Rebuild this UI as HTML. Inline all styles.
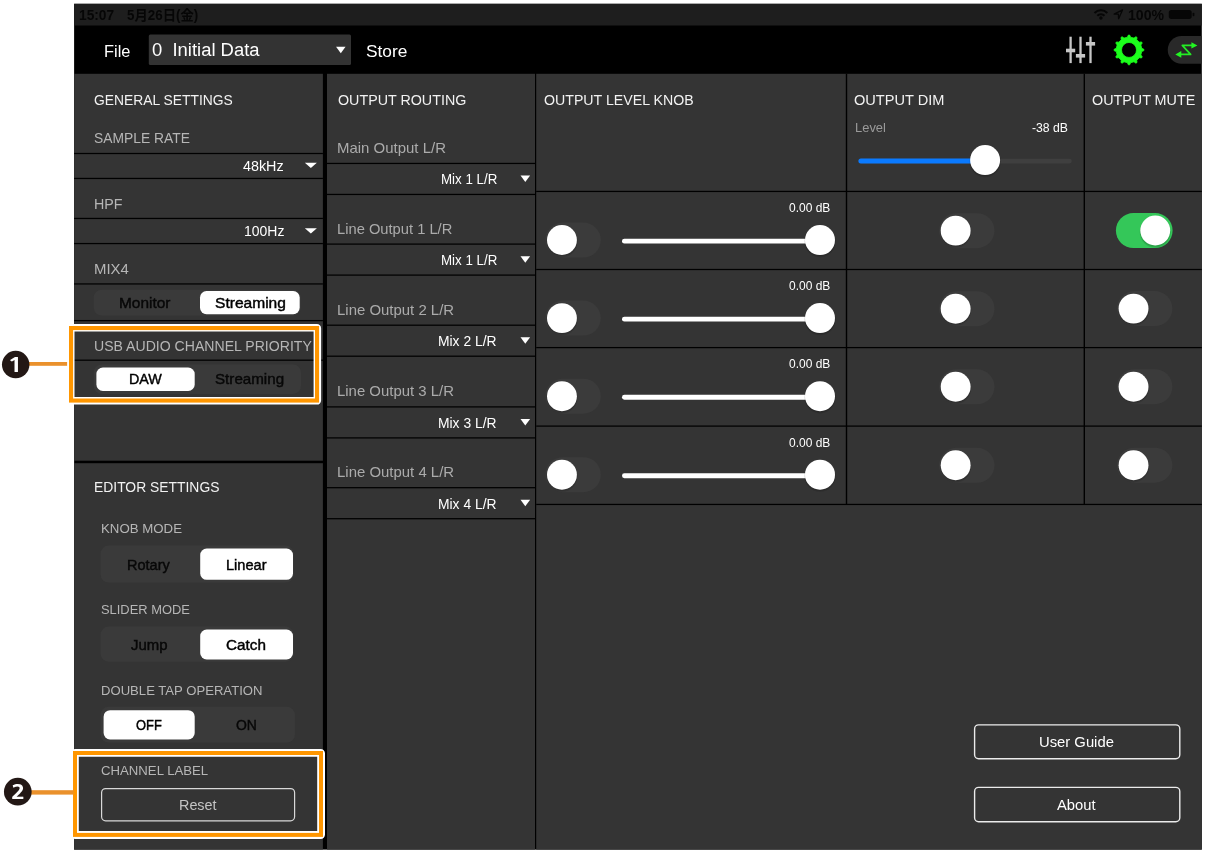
<!DOCTYPE html>
<html lang="ja"><head><meta charset="utf-8"><title>Settings</title>
<style>
html,body{margin:0;padding:0;background:#fff;}
body{width:1205px;height:852px;position:relative;overflow:hidden;font-family:"Liberation Sans","Noto Sans CJK JP",sans-serif;}
#app{position:absolute;left:0;top:0;width:1205px;height:852px;will-change:transform;}
#shapes{position:absolute;left:0;top:0;display:block;}
.t{position:absolute;white-space:nowrap;line-height:1.4;transform-origin:0 0;}
</style></head><body><div id="app">
<svg id="shapes" class="r" width="1205" height="852" viewBox="0 0 1205 852">
<rect x="74.10" y="3.80" width="1127.70" height="845.80" fill="#000"/>
<rect x="74.10" y="3.80" width="1127.70" height="21.70" fill="#1e1e1e"/>
<rect x="1168.80" y="10.00" width="22.90" height="8.90" rx="2.6" fill="#060606"/>
<rect x="1192.60" y="12.80" width="1.80" height="3.40" rx="0.8" fill="#060606"/>
<g fill="none" stroke="#060606" stroke-width="2.1"><path d="M1094.5 12.9a9.2 9.2 0 0 1 12.8 0"/><path d="M1097.3 15.8a5.3 5.3 0 0 1 7.2 0"/></g><circle cx="1100.9" cy="18" r="1.7" fill="#060606"/><path d="M1122.5 9.9L1114.2 14.1h4.2l.2 4.6z" fill="none" stroke="#060606" stroke-width="1.3" stroke-linejoin="round"/>
<rect x="148.80" y="34.50" width="202.20" height="30.60" rx="1.5" fill="#333"/>
<path d="M336.05 46.75h9.5l-4.75 6.5z" fill="#fff"/>
<rect x="1069.45" y="36.70" width="2.30" height="26.40" fill="#c6c6c6"/>
<rect x="1066.00" y="48.70" width="9.20" height="3.60" fill="#c6c6c6"/>
<rect x="1079.35" y="36.70" width="2.30" height="26.40" fill="#c6c6c6"/>
<rect x="1075.90" y="54.00" width="9.20" height="3.60" fill="#c6c6c6"/>
<rect x="1089.35" y="36.70" width="2.30" height="26.40" fill="#c6c6c6"/>
<rect x="1085.90" y="42.00" width="9.20" height="3.60" fill="#c6c6c6"/>
<path d="M1127.40 37.20L1128.33 35.07L1129.67 35.07L1130.60 37.20L1133.99 38.11L1135.86 36.72L1137.02 37.39L1136.76 39.71L1139.24 42.19L1141.56 41.93L1142.23 43.09L1140.84 44.96L1141.75 48.35L1143.88 49.28L1143.88 50.62L1141.75 51.55L1140.84 54.94L1142.23 56.81L1141.56 57.97L1139.24 57.71L1136.76 60.19L1137.02 62.51L1135.86 63.18L1133.99 61.79L1130.60 62.70L1129.67 64.83L1128.33 64.83L1127.40 62.70L1124.01 61.79L1122.14 63.18L1120.98 62.51L1121.24 60.19L1118.76 57.71L1116.44 57.97L1115.77 56.81L1117.16 54.94L1116.25 51.55L1114.12 50.62L1114.12 49.28L1116.25 48.35L1117.16 44.96L1115.77 43.09L1116.44 41.93L1118.76 42.19L1121.24 39.71L1120.98 37.39L1122.14 36.72L1124.01 38.11ZM1136.50 49.95A7.5 7.5 0 1 0 1121.50 49.95A7.5 7.5 0 1 0 1136.50 49.95Z" fill="#1cff1c" fill-rule="evenodd" stroke="#1cff1c" stroke-width="0.8" stroke-linejoin="round"/>
<path d="M1201.8 36H1181.6a13.85 13.85 0 0 0 0 27.7H1201.8z" fill="#292929"/>
<g transform="translate(1172 38)"><path d="M8 16.4H18.6L10.3 7.4H21" fill="none" stroke="#24ec24" stroke-width="1.7" stroke-linejoin="round" stroke-linecap="round"/><path d="M3.3 16.4L9.3 13.1V19.7Z M25.4 7.4L19.4 4.2V10.6Z" fill="#22f522"/></g>
<rect x="74.10" y="73.80" width="248.80" height="386.90" fill="#343434"/>
<rect x="74.10" y="463.20" width="248.80" height="386.40" fill="#343434"/>
<rect x="74.10" y="152.88" width="248.80" height="1.25" fill="#000"/>
<rect x="74.10" y="177.82" width="248.80" height="1.25" fill="#000"/>
<rect x="74.10" y="217.82" width="248.80" height="1.25" fill="#000"/>
<rect x="74.10" y="242.93" width="248.80" height="1.25" fill="#000"/>
<rect x="74.10" y="283.32" width="248.80" height="1.25" fill="#000"/>
<rect x="74.10" y="319.98" width="248.80" height="1.25" fill="#000"/>
<rect x="74.10" y="359.57" width="248.80" height="1.25" fill="#000"/>
<path d="M304.85 162.65h12.0l-6.00 5.3z" fill="#fff"/>
<path d="M304.85 228.25h12.0l-6.00 5.3z" fill="#fff"/>
<rect x="93.70" y="289.70" width="207.10" height="25.90" rx="8" fill="#3a3a3a"/>
<rect x="200.00" y="291.00" width="99.70" height="23.20" rx="6.5" fill="#fff"/>
<rect x="93.70" y="364.40" width="207.30" height="29.50" rx="8" fill="#3a3a3a"/>
<rect x="96.40" y="367.50" width="98.30" height="23.50" rx="6.5" fill="#fff"/>
<rect x="100.60" y="545.60" width="193.00" height="37.00" rx="8" fill="#3a3a3a"/>
<rect x="200.20" y="548.60" width="92.80" height="31.20" rx="6.5" fill="#fff"/>
<rect x="100.60" y="626.60" width="193.00" height="35.10" rx="8" fill="#3a3a3a"/>
<rect x="200.20" y="629.60" width="92.80" height="29.90" rx="6.5" fill="#fff"/>
<rect x="100.60" y="706.80" width="194.30" height="35.80" rx="8" fill="#3a3a3a"/>
<rect x="103.60" y="710.20" width="91.10" height="29.30" rx="6.5" fill="#fff"/>
<rect x="101.6" y="788.6" width="193" height="32.2" rx="4" fill="none" stroke="#d8d8d8" stroke-width="1.2"/>
<rect x="327.00" y="73.80" width="208.00" height="775.80" fill="#343434"/>
<rect x="327.00" y="162.82" width="208.00" height="1.25" fill="#000"/>
<rect x="327.00" y="193.82" width="208.00" height="1.25" fill="#000"/>
<path d="M520.50 175.60h9.6l-4.80 6.5z" fill="#fff"/>
<rect x="327.00" y="243.47" width="208.00" height="1.25" fill="#000"/>
<rect x="327.00" y="274.48" width="208.00" height="1.25" fill="#000"/>
<path d="M520.50 256.25h9.6l-4.80 6.5z" fill="#fff"/>
<rect x="327.00" y="324.57" width="208.00" height="1.25" fill="#000"/>
<rect x="327.00" y="355.57" width="208.00" height="1.25" fill="#000"/>
<path d="M520.50 337.35h9.6l-4.80 6.5z" fill="#fff"/>
<rect x="327.00" y="406.27" width="208.00" height="1.25" fill="#000"/>
<rect x="327.00" y="437.27" width="208.00" height="1.25" fill="#000"/>
<path d="M520.50 419.05h9.6l-4.80 6.5z" fill="#fff"/>
<rect x="327.00" y="487.07" width="208.00" height="1.25" fill="#000"/>
<rect x="327.00" y="518.08" width="208.00" height="1.25" fill="#000"/>
<path d="M520.50 499.85h9.6l-4.80 6.5z" fill="#fff"/>
<rect x="536.20" y="73.80" width="665.60" height="775.80" fill="#343434"/>
<rect x="845.80" y="73.80" width="1.40" height="430.65" fill="#000"/>
<rect x="1083.60" y="73.80" width="1.40" height="430.65" fill="#000"/>
<rect x="536.20" y="190.82" width="665.60" height="1.25" fill="#000"/>
<rect x="536.20" y="268.88" width="665.60" height="1.25" fill="#000"/>
<rect x="536.20" y="346.98" width="665.60" height="1.25" fill="#000"/>
<rect x="536.20" y="425.48" width="665.60" height="1.25" fill="#000"/>
<rect x="536.20" y="503.82" width="665.60" height="1.25" fill="#000"/>
<rect x="858.60" y="158.80" width="213.20" height="4.60" rx="2.3" fill="#3f3f3f"/>
<rect x="858.40" y="158.60" width="127.60" height="5.00" rx="2.5" fill="#0a7aff"/>
<circle cx="985.10" cy="161.70" r="15.60" fill="#000" opacity="0.10"/>
<circle cx="985.10" cy="160.90" r="15.30" fill="#000" opacity="0.10"/>
<circle cx="985.10" cy="160.10" r="15.00" fill="#fff"/>
<rect x="545.40" y="222.55" width="55.40" height="35.00" rx="17.5" fill="#3b3b3b"/>
<circle cx="561.95" cy="241.65" r="15.55" fill="#000" opacity="0.10"/>
<circle cx="561.95" cy="240.85" r="15.25" fill="#000" opacity="0.10"/>
<circle cx="561.95" cy="240.05" r="14.95" fill="#fff"/>
<rect x="622.00" y="238.65" width="200.00" height="4.90" rx="2.4" fill="#fff"/>
<circle cx="820.00" cy="241.65" r="15.60" fill="#000" opacity="0.10"/>
<circle cx="820.00" cy="240.85" r="15.30" fill="#000" opacity="0.10"/>
<circle cx="820.00" cy="240.05" r="15.00" fill="#fff"/>
<rect x="939.10" y="213.15" width="55.40" height="35.00" rx="17.5" fill="#3b3b3b"/>
<circle cx="955.65" cy="232.25" r="15.55" fill="#000" opacity="0.10"/>
<circle cx="955.65" cy="231.45" r="15.25" fill="#000" opacity="0.10"/>
<circle cx="955.65" cy="230.65" r="14.95" fill="#fff"/>
<rect x="1115.90" y="213.05" width="56.70" height="35.00" rx="17.5" fill="#34c759"/>
<circle cx="1155.25" cy="232.15" r="15.55" fill="#000" opacity="0.10"/>
<circle cx="1155.25" cy="231.35" r="15.25" fill="#000" opacity="0.10"/>
<circle cx="1155.25" cy="230.55" r="14.95" fill="#fff"/>
<rect x="545.40" y="300.60" width="55.40" height="35.00" rx="17.5" fill="#3b3b3b"/>
<circle cx="561.95" cy="319.70" r="15.55" fill="#000" opacity="0.10"/>
<circle cx="561.95" cy="318.90" r="15.25" fill="#000" opacity="0.10"/>
<circle cx="561.95" cy="318.10" r="14.95" fill="#fff"/>
<rect x="622.00" y="316.70" width="200.00" height="4.90" rx="2.4" fill="#fff"/>
<circle cx="820.00" cy="319.70" r="15.60" fill="#000" opacity="0.10"/>
<circle cx="820.00" cy="318.90" r="15.30" fill="#000" opacity="0.10"/>
<circle cx="820.00" cy="318.10" r="15.00" fill="#fff"/>
<rect x="939.10" y="291.20" width="55.40" height="35.00" rx="17.5" fill="#3b3b3b"/>
<circle cx="955.65" cy="310.30" r="15.55" fill="#000" opacity="0.10"/>
<circle cx="955.65" cy="309.50" r="15.25" fill="#000" opacity="0.10"/>
<circle cx="955.65" cy="308.70" r="14.95" fill="#fff"/>
<rect x="1117.00" y="291.10" width="55.40" height="35.00" rx="17.5" fill="#3b3b3b"/>
<circle cx="1133.55" cy="310.20" r="15.55" fill="#000" opacity="0.10"/>
<circle cx="1133.55" cy="309.40" r="15.25" fill="#000" opacity="0.10"/>
<circle cx="1133.55" cy="308.60" r="14.95" fill="#fff"/>
<rect x="545.40" y="378.70" width="55.40" height="35.00" rx="17.5" fill="#3b3b3b"/>
<circle cx="561.95" cy="397.80" r="15.55" fill="#000" opacity="0.10"/>
<circle cx="561.95" cy="397.00" r="15.25" fill="#000" opacity="0.10"/>
<circle cx="561.95" cy="396.20" r="14.95" fill="#fff"/>
<rect x="622.00" y="394.80" width="200.00" height="4.90" rx="2.4" fill="#fff"/>
<circle cx="820.00" cy="397.80" r="15.60" fill="#000" opacity="0.10"/>
<circle cx="820.00" cy="397.00" r="15.30" fill="#000" opacity="0.10"/>
<circle cx="820.00" cy="396.20" r="15.00" fill="#fff"/>
<rect x="939.10" y="369.30" width="55.40" height="35.00" rx="17.5" fill="#3b3b3b"/>
<circle cx="955.65" cy="388.40" r="15.55" fill="#000" opacity="0.10"/>
<circle cx="955.65" cy="387.60" r="15.25" fill="#000" opacity="0.10"/>
<circle cx="955.65" cy="386.80" r="14.95" fill="#fff"/>
<rect x="1117.00" y="369.20" width="55.40" height="35.00" rx="17.5" fill="#3b3b3b"/>
<circle cx="1133.55" cy="388.30" r="15.55" fill="#000" opacity="0.10"/>
<circle cx="1133.55" cy="387.50" r="15.25" fill="#000" opacity="0.10"/>
<circle cx="1133.55" cy="386.70" r="14.95" fill="#fff"/>
<rect x="545.40" y="457.20" width="55.40" height="35.00" rx="17.5" fill="#3b3b3b"/>
<circle cx="561.95" cy="476.30" r="15.55" fill="#000" opacity="0.10"/>
<circle cx="561.95" cy="475.50" r="15.25" fill="#000" opacity="0.10"/>
<circle cx="561.95" cy="474.70" r="14.95" fill="#fff"/>
<rect x="622.00" y="473.30" width="200.00" height="4.90" rx="2.4" fill="#fff"/>
<circle cx="820.00" cy="476.30" r="15.60" fill="#000" opacity="0.10"/>
<circle cx="820.00" cy="475.50" r="15.30" fill="#000" opacity="0.10"/>
<circle cx="820.00" cy="474.70" r="15.00" fill="#fff"/>
<rect x="939.10" y="447.80" width="55.40" height="35.00" rx="17.5" fill="#3b3b3b"/>
<circle cx="955.65" cy="466.90" r="15.55" fill="#000" opacity="0.10"/>
<circle cx="955.65" cy="466.10" r="15.25" fill="#000" opacity="0.10"/>
<circle cx="955.65" cy="465.30" r="14.95" fill="#fff"/>
<rect x="1117.00" y="447.70" width="55.40" height="35.00" rx="17.5" fill="#3b3b3b"/>
<circle cx="1133.55" cy="466.80" r="15.55" fill="#000" opacity="0.10"/>
<circle cx="1133.55" cy="466.00" r="15.25" fill="#000" opacity="0.10"/>
<circle cx="1133.55" cy="465.20" r="14.95" fill="#fff"/>
<rect x="974.60" y="724.90" width="205.2" height="33.90" rx="4" fill="none" stroke="#ebebeb" stroke-width="1.4"/>
<rect x="974.60" y="787.40" width="205.2" height="34.30" rx="4" fill="none" stroke="#ebebeb" stroke-width="1.4"/>
<rect x="70.75" y="327.75" width="246.60" height="73.10" rx="0.4" fill="none" stroke="#fff" stroke-width="7.50"/>
<rect x="71.05" y="328.05" width="246.00" height="72.50" rx="0" fill="none" stroke="#ff9600" stroke-width="4.10"/>
<rect x="15.70" y="362.00" width="51.40" height="3.80" fill="#ea912c"/>
<circle cx="15.70" cy="364.60" r="13.75" fill="#231815"/>
<rect x="74.90" y="752.90" width="246.20" height="82.10" rx="0.4" fill="none" stroke="#fff" stroke-width="7.80"/>
<rect x="75.00" y="753.00" width="246.00" height="81.90" rx="0" fill="none" stroke="#ff9600" stroke-width="4.00"/>
<rect x="17.80" y="790.20" width="55.70" height="4.40" fill="#ea912c"/>
<circle cx="17.80" cy="791.70" r="13.85" fill="#231815"/>
</svg>
<div class="t" id="t0" style="left:79.49px;top:5.54px;font-size:14.1px;color:#060606;transform:scaleX(0.9745);font-weight:700;">15:07</div>
<div class="t" id="t1" style="left:126.84px;top:5.54px;font-size:14.1px;color:#060606;transform:scaleX(0.9476);font-weight:700;">5月26日(金)</div>
<div class="t" id="t2" style="left:1127.90px;top:5.54px;font-size:13.81px;color:#060606;transform:scaleX(1.0204);font-weight:700;">100%</div>
<div class="t" id="t3" style="left:103.66px;top:41.40px;font-size:15.99px;color:#fff;transform:scaleX(1.0244);">File</div>
<div class="t" id="t4" style="left:151.96px;top:37.26px;font-size:19.19px;color:#fff;transform:scaleX(0.9599);">0&nbsp; Initial Data</div>
<div class="t" id="t5" style="left:365.87px;top:41.40px;font-size:15.99px;color:#fff;transform:scaleX(1.0839);">Store</div>
<div class="t" id="t6" style="left:93.89px;top:89.83px;font-size:14.83px;color:#f2f2f2;transform:scaleX(0.9342);">GENERAL SETTINGS</div>
<div class="t" id="t7" style="left:93.69px;top:128.39px;font-size:14.53px;color:#b6b6b6;transform:scaleX(0.9533);">SAMPLE RATE</div>
<div class="t" id="t8" style="left:242.86px;top:156.98px;font-size:14.1px;color:#fff;transform:scaleX(1.0173);">48kHz</div>
<div class="t" id="t9" style="left:93.74px;top:193.69px;font-size:14.53px;color:#b6b6b6;transform:scaleX(0.9830);">HPF</div>
<div class="t" id="t10" style="left:243.58px;top:222.38px;font-size:14.1px;color:#fff;transform:scaleX(0.9911);">100Hz</div>
<div class="t" id="t11" style="left:94.11px;top:258.99px;font-size:14.53px;color:#b6b6b6;transform:scaleX(1.0285);">MIX4</div>
<div class="t" id="t12" style="left:118.92px;top:292.86px;font-size:14.68px;color:#080808;transform:scaleX(1.0519);-webkit-text-stroke:0.42px currentColor;">Monitor</div>
<div class="t" id="t13" style="left:215.02px;top:292.86px;font-size:14.68px;color:#000;transform:scaleX(1.0608);-webkit-text-stroke:0.42px currentColor;">Streaming</div>
<div class="t" id="t14" style="left:94.13px;top:335.89px;font-size:14.53px;color:#b6b6b6;transform:scaleX(0.9702);">USB AUDIO CHANNEL PRIORITY</div>
<div class="t" id="t15" style="left:129.09px;top:369.46px;font-size:14.68px;color:#000;transform:scaleX(0.9758);-webkit-text-stroke:0.42px currentColor;">DAW</div>
<div class="t" id="t16" style="left:214.92px;top:369.46px;font-size:14.68px;color:#080808;transform:scaleX(1.0335);-webkit-text-stroke:0.42px currentColor;">Streaming</div>
<div class="t" id="t17" style="left:93.94px;top:476.63px;font-size:14.83px;color:#f2f2f2;transform:scaleX(0.9360);">EDITOR SETTINGS</div>
<div class="t" id="t18" style="left:100.55px;top:519.85px;font-size:13.23px;color:#b6b6b6;transform:scaleX(1.0023);">KNOB MODE</div>
<div class="t" id="t19" style="left:126.89px;top:554.62px;font-size:14.39px;color:#080808;transform:scaleX(1.0111);-webkit-text-stroke:0.42px currentColor;">Rotary</div>
<div class="t" id="t20" style="left:226.19px;top:554.62px;font-size:14.39px;color:#000;transform:scaleX(1.0160);-webkit-text-stroke:0.42px currentColor;">Linear</div>
<div class="t" id="t21" style="left:100.73px;top:601.35px;font-size:13.23px;color:#b6b6b6;transform:scaleX(0.9762);">SLIDER MODE</div>
<div class="t" id="t22" style="left:131.46px;top:634.82px;font-size:14.39px;color:#080808;transform:scaleX(1.0372);-webkit-text-stroke:0.42px currentColor;">Jump</div>
<div class="t" id="t23" style="left:226.19px;top:634.82px;font-size:14.39px;color:#000;transform:scaleX(1.0620);-webkit-text-stroke:0.42px currentColor;">Catch</div>
<div class="t" id="t24" style="left:100.56px;top:682.15px;font-size:13.23px;color:#b6b6b6;transform:scaleX(0.9915);">DOUBLE TAP OPERATION</div>
<div class="t" id="t25" style="left:136.08px;top:715.32px;font-size:14.39px;color:#000;transform:scaleX(0.8958);-webkit-text-stroke:0.42px currentColor;">OFF</div>
<div class="t" id="t26" style="left:235.91px;top:715.32px;font-size:14.39px;color:#080808;transform:scaleX(0.9709);-webkit-text-stroke:0.42px currentColor;">ON</div>
<div class="t" id="t27" style="left:100.76px;top:761.55px;font-size:13.23px;color:#b6b6b6;transform:scaleX(0.9969);">CHANNEL LABEL</div>
<div class="t" id="t28" style="left:178.97px;top:795.22px;font-size:14.39px;color:#c4c4c4;transform:scaleX(0.9999);">Reset</div>
<div class="t" id="t29" style="left:337.61px;top:89.83px;font-size:14.83px;color:#f2f2f2;transform:scaleX(0.9634);">OUTPUT ROUTING</div>
<div class="t" id="t30" style="left:337.34px;top:139.02px;font-size:14.1px;color:#ababab;transform:scaleX(1.0617);">Main Output L/R</div>
<div class="t" id="t31" style="left:440.51px;top:169.61px;font-size:13.95px;color:#fff;transform:scaleX(0.9567);">Mix 1 L/R</div>
<div class="t" id="t32" style="left:337.48px;top:219.92px;font-size:14.1px;color:#ababab;transform:scaleX(1.0435);">Line Output 1 L/R</div>
<div class="t" id="t33" style="left:440.51px;top:250.51px;font-size:13.95px;color:#fff;transform:scaleX(0.9567);">Mix 1 L/R</div>
<div class="t" id="t34" style="left:337.46px;top:301.02px;font-size:14.1px;color:#ababab;transform:scaleX(1.0601);">Line Output 2 L/R</div>
<div class="t" id="t35" style="left:437.85px;top:331.61px;font-size:13.95px;color:#fff;transform:scaleX(0.9944);">Mix 2 L/R</div>
<div class="t" id="t36" style="left:337.07px;top:381.72px;font-size:14.1px;color:#ababab;transform:scaleX(1.0591);">Line Output 3 L/R</div>
<div class="t" id="t37" style="left:437.85px;top:414.31px;font-size:13.95px;color:#fff;transform:scaleX(0.9944);">Mix 3 L/R</div>
<div class="t" id="t38" style="left:337.46px;top:462.52px;font-size:14.1px;color:#ababab;transform:scaleX(1.0601);">Line Output 4 L/R</div>
<div class="t" id="t39" style="left:437.85px;top:495.11px;font-size:13.95px;color:#fff;transform:scaleX(0.9944);">Mix 4 L/R</div>
<div class="t" id="t40" style="left:543.66px;top:89.73px;font-size:14.83px;color:#f2f2f2;transform:scaleX(0.9558);">OUTPUT LEVEL KNOB</div>
<div class="t" id="t41" style="left:854.33px;top:90.03px;font-size:14.83px;color:#f2f2f2;transform:scaleX(0.9830);">OUTPUT DIM</div>
<div class="t" id="t42" style="left:1092.43px;top:90.03px;font-size:14.83px;color:#f2f2f2;transform:scaleX(0.9662);">OUTPUT MUTE</div>
<div class="t" id="t43" style="left:855.05px;top:119.73px;font-size:12.35px;color:#9a9a9a;transform:scaleX(1.0473);">Level</div>
<div class="t" id="t44" style="left:1031.78px;top:119.73px;font-size:12.35px;color:#fff;transform:scaleX(0.9906);">-38 dB</div>
<div class="t" id="t45" style="left:788.63px;top:199.50px;font-size:12.5px;color:#fff;transform:scaleX(0.9584);">0.00 dB</div>
<div class="t" id="t46" style="left:788.63px;top:277.50px;font-size:12.5px;color:#fff;transform:scaleX(0.9584);">0.00 dB</div>
<div class="t" id="t47" style="left:788.63px;top:356.40px;font-size:12.5px;color:#fff;transform:scaleX(0.9584);">0.00 dB</div>
<div class="t" id="t48" style="left:788.63px;top:435.20px;font-size:12.5px;color:#fff;transform:scaleX(0.9584);">0.00 dB</div>
<div class="t" id="t49" style="left:1038.86px;top:731.92px;font-size:14.39px;color:#fff;transform:scaleX(1.0298);">User Guide</div>
<div class="t" id="t50" style="left:1057.43px;top:795.85px;font-size:14.24px;color:#fff;transform:scaleX(1.0381);">About</div>
<div class="t" id="t51" style="left:6.20px;top:352.64px;font-size:18.87px;color:#fff;transform:scaleX(1.6729);font-weight:700;font-family:'NanumGothic','Liberation Sans',sans-serif;">1</div>
<div class="t" id="t52" style="left:10.57px;top:779.12px;font-size:19.37px;color:#fff;transform:scaleX(1.2190);font-weight:800;font-family:'NanumGothic','Liberation Sans',sans-serif;">2</div>
</div></body></html>
